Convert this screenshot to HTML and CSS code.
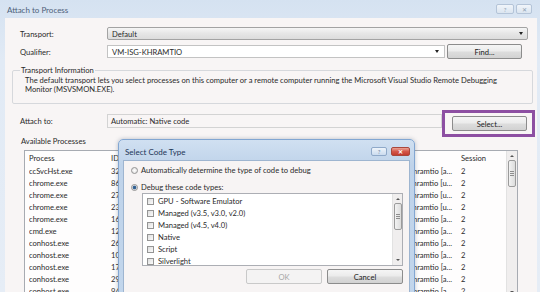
FILE: index.html
```html
<!DOCTYPE html>
<html>
<head>
<meta charset="utf-8">
<link rel="stylesheet" href="styles.css">
</head>
<body>
<div class="win">
  <div class="titlebar">
    <span class="title">Attach to Process</span>
    <div class="tbtns">
      <span class="tb">?</span>
      <span class="tb tb-x">✕</span>
    </div>
  </div>
  <div class="client">
    <div class="row r-transport">
      <span class="lbl">Transport:</span>
      <div class="combo combo-ro"><span>Default</span><span class="arrow"></span></div>
    </div>
    <div class="row r-qual">
      <span class="lbl">Qualifier:</span>
      <div class="combo combo-ed"><span>VM-ISG-KHRAMTIO</span><span class="arrow"></span></div>
      <button class="btn btn-find">Find...</button>
    </div>
    <fieldset class="group">
      <legend>Transport Information</legend>
      <p>The default transport lets you select processes on this computer or a remote computer running the Microsoft Visual Studio Remote Debugging Monitor (MSVSMON.EXE).</p>
    </fieldset>
    <div class="row r-attach">
      <span class="lbl lbl-attach">Attach to:</span>
      <div class="field">Automatic: Native code</div>
      <div class="hl"><button class="btn btn-select">Select...</button></div>
    </div>
    <div class="avail">Available Processes</div>
    <div class="plist">
      <div class="pgrid">
        <div class="prow phead"><span>Process</span><span>ID</span><span></span><span></span><span></span><span>Session</span></div>
        <div class="prow"><span>ccSvcHst.exe</span><span>3244</span><span></span><span></span><span class="user">khramtio [a...</span><span>2</span></div>
        <div class="prow"><span>chrome.exe</span><span>8612</span><span></span><span></span><span class="user">khramtio [u...</span><span>2</span></div>
        <div class="prow"><span>chrome.exe</span><span>2736</span><span></span><span></span><span class="user">khramtio [u...</span><span>2</span></div>
        <div class="prow"><span>chrome.exe</span><span>2340</span><span></span><span></span><span class="user">khramtio [u...</span><span>2</span></div>
        <div class="prow"><span>chrome.exe</span><span>1652</span><span></span><span></span><span class="user">khramtio [a...</span><span>2</span></div>
        <div class="prow"><span>cmd.exe</span><span>1288</span><span></span><span></span><span class="user">khramtio [a...</span><span>2</span></div>
        <div class="prow"><span>conhost.exe</span><span>2600</span><span></span><span></span><span class="user">khramtio [a...</span><span>2</span></div>
        <div class="prow"><span>conhost.exe</span><span>1076</span><span></span><span></span><span class="user">khramtio [a...</span><span>2</span></div>
        <div class="prow"><span>conhost.exe</span><span>1760</span><span></span><span></span><span class="user">khramtio [a...</span><span>2</span></div>
        <div class="prow"><span>conhost.exe</span><span>2932</span><span></span><span></span><span class="user">khramtio [a...</span><span>2</span></div>
        <div class="prow"><span>conhost.exe</span><span>9408</span><span></span><span></span><span class="user">khramtio [a...</span><span>2</span></div>
      </div>
      <div class="vscroll vs-main">
        <span class="sarrow up"></span>
        <span class="thumb"><i></i><i></i><i></i></span>
        <span class="sarrow down"></span>
      </div>
    </div>
  </div>

  <div class="dlg">
    <div class="dtitle">
      <span class="dtext">Select Code Type</span>
      <span class="dbtn dhelp">?</span>
      <span class="dbtn dclose">✕</span>
    </div>
    <div class="dclient">
      <div class="radio-row"><span class="radio"></span><span>Automatically determine the type of code to debug</span></div>
      <div class="radio-row r2"><span class="radio on"></span><span>Debug these code types:</span></div>
      <div class="clist">
        <div class="citems">
          <div class="citem"><span class="cb"></span><span>GPU - Software Emulator</span></div>
          <div class="citem"><span class="cb"></span><span>Managed (v3.5, v3.0, v2.0)</span></div>
          <div class="citem"><span class="cb"></span><span>Managed (v4.5, v4.0)</span></div>
          <div class="citem"><span class="cb"></span><span>Native</span></div>
          <div class="citem"><span class="cb"></span><span>Script</span></div>
          <div class="citem"><span class="cb"></span><span>Silverlight</span></div>
        </div>
        <div class="vscroll vs-dlg">
          <span class="sarrow up"></span>
          <span class="thumb"><i></i><i></i><i></i></span>
          <span class="sarrow down"></span>
        </div>
      </div>
      <div class="dbuttons">
        <button class="btn btn-ok" disabled>OK</button>
        <button class="btn btn-cancel">Cancel</button>
      </div>
    </div>
  </div>
</div>
</body>
</html>
```

FILE: styles.css
```css
* { box-sizing: border-box; }
html, body { margin: 0; padding: 0; }
body {
  width: 540px;
  height: 292px;
  overflow: hidden;
  font-family: "Lato", "Open Sans", sans-serif;
  font-size: 7.6px;
  color: #2a2a2a;
  background: #dde7f3;
}
.win {
  position: relative;
  width: 540px;
  height: 292px;
  overflow: hidden;
  display: flex;
  flex-direction: column;
  background: linear-gradient(#d5e2f1, #e1eaf5 60px, #e6edf6);
}
.titlebar {
  height: 18px;
  flex: none;
  display: flex;
  align-items: flex-start;
  padding-left: 7px;
}
.title {
  margin-top: 5px;
  font-size: 8px;
  color: #4d6079;
}
.tbtns {
  margin-left: auto;
  margin-right: 8px;
  margin-top: 4px;
  display: flex;
  gap: 2px;
}
.tb {
  width: 18px;
  height: 10px;
  border: 1px solid #b4c4d8;
  border-radius: 2px;
  background: linear-gradient(#f1f5fa, #dbe5f0);
  color: #8d9db1;
  font-size: 6px;
  display: flex;
  align-items: center;
  justify-content: center;
}
.tb-x { width: 16px; }

.client {
  flex: 1;
  margin-left: 5px;
  margin-right: 3px;
  background: #f8f5f5;
  padding: 9px 9px 0 15px;
  display: flex;
  flex-direction: column;
}
.row { display: flex; align-items: center; }
.lbl { width: 87px; flex: none; }
.combo {
  height: 13px;
  border: 1px solid #adadad;
  border-radius: 2px;
  display: flex;
  align-items: center;
  padding-left: 4px;
  padding-right: 4px;
}
.combo span:first-child { flex: 1; }
.combo-ro {
  flex: 1;
  background: linear-gradient(#f6f6f6, #e6e6e6 50%, #dcdcdc);
  border-color: #a3a3a3;
}
.combo-ed {
  width: 338px;
  background: #ffffff;
  border-color: #c3c3c3;
  border-radius: 0;
  padding-right: 5px;
}
.arrow {
  width: 0;
  height: 0;
  border-left: 2.5px solid transparent;
  border-right: 2.5px solid transparent;
  border-top: 3px solid #222;
}
.r-qual { margin-top: 4px; }
.btn {
  font-family: inherit;
  font-size: 7.6px;
  color: #222;
  height: 15px;
  width: 75px;
  padding: 0;
  border: 1px solid #8c8c8c;
  border-radius: 2px;
  background: linear-gradient(#f5f5f5, #ebebeb 48%, #dddddd 52%, #d2d2d2);
  display: flex;
  align-items: center;
  justify-content: center;
}
.btn-find { margin-left: 2px; }

.group {
  margin: 6px -5px 0 -8px;
  border: 1px solid #d6d8dc;
  border-radius: 2px;
  padding: 1px 10px 9px 12px;
  min-width: 0;
}
.group legend {
  padding: 0 1px;
  margin-left: -5px;
  line-height: 10px;
}
.group p {
  margin: 0;
  line-height: 9px;
}

.r-attach {
  margin-top: 6px;
  align-items: flex-start;
}
.lbl-attach { margin-top: 4px; line-height: 14px; }
.field {
  flex: 1;
  margin-top: 4px;
  height: 14px;
  border: 1px solid #d3d3d3;
  background: #f8f5f5;
  padding-left: 3px;
  display: flex;
  align-items: center;
}
.hl {
  width: 93px;
  height: 27px;
  margin-right: -7px;
  border: 3px solid #8d4fa2;
  padding: 3px 5px 0 7px;
}

.avail {
  margin-top: -1px;
  margin-left: 1px;
  line-height: 10px;
}
.plist {
  margin: 4px 10px 0 4px;
  flex: 1;
  border: 1px solid #a7abb2;
  background: #fefdfd;
  display: flex;
  overflow: hidden;
}
.pgrid {
  flex: 1;
  padding-left: 4px;
}
.prow {
  display: grid;
  grid-template-columns: 82px 40px 120px 80px 106px 44px;
  height: 12px;
  line-height: 12px;
  white-space: nowrap;
}
.prow span { overflow: hidden; }
.phead { height: 14px; line-height: 14px; }
.prow span:last-child { padding-left: 4px; }
.prow .user {
  display: flex;
  justify-content: flex-end;
  padding-right: 5px;
}
.vscroll {
  flex: none;
  display: flex;
  flex-direction: column;
  align-items: center;
  background: #f0eeee;
  border-left: 1px solid #e2e2e2;
}
.vs-main { width: 11px; }
.vs-dlg { width: 10px; }
.sarrow {
  width: 0;
  height: 0;
  border-left: 2px solid transparent;
  border-right: 2px solid transparent;
}
.sarrow.up { border-bottom: 2px solid #555; margin-top: 4px; }
.sarrow.down { border-top: 2px solid #555; margin-top: auto; margin-bottom: 4px; }
.thumb {
  width: 8px;
  border: 1px solid #9b9b9b;
  border-radius: 2px;
  background: linear-gradient(90deg, #f3f3f3, #dcdcdc);
  display: flex;
  flex-direction: column;
  align-items: center;
  justify-content: center;
  gap: 1px;
}
.thumb i { display: block; width: 4px; height: 1px; background: #8d8d8d; }
.vs-main .thumb { height: 27px; margin-top: 3px; }
.vs-dlg .thumb { height: 27px; margin-top: 3px; }

/* Select Code Type dialog */
.dlg {
  position: absolute;
  left: 118px;
  top: 139px;
  width: 297px;
  height: 170px;
  border: 1px solid #82a6d2;
  border-radius: 5px 5px 0 0;
  background: linear-gradient(#d0e0f1, #bfd3ea 25px, #c2d6ec);
  padding: 0 4px;
  display: flex;
  flex-direction: column;
  box-shadow: 0 0 4px rgba(60, 80, 110, 0.35);
}
.dtitle {
  height: 20px;
  flex: none;
  display: flex;
  align-items: flex-start;
  padding-left: 2px;
}
.dtext {
  margin-top: 7px;
  font-size: 8px;
  color: #1d3556;
}
.dbtn {
  margin-top: 7px;
  height: 9px;
  border-radius: 2px;
  display: flex;
  align-items: center;
  justify-content: center;
  font-size: 6px;
}
.dhelp {
  margin-left: auto;
  width: 16px;
  border: 1px solid #8fa9c9;
  background: linear-gradient(#eef4fa, #cbdcef);
  color: #6b83a3;
}
.dclose {
  width: 19px;
  margin-left: 4px;
  border: 1px solid #a8473c;
  background: linear-gradient(#eba294, #d4574a 50%, #c33c2f);
  color: #fff;
  font-weight: bold;
}
.dclient {
  flex: 1;
  background: #f7f4f4;
  border: 1px solid #9eb5d0;
  padding: 4px 6px 0 7px;
  display: flex;
  flex-direction: column;
}
.radio-row {
  display: flex;
  align-items: center;
  height: 10px;
  gap: 3px;
}
.radio-row.r2 { margin-top: 7px; }
.radio {
  width: 7px;
  height: 7px;
  border-radius: 50%;
  border: 1px solid #939393;
  background: radial-gradient(circle, #ffffff, #dcdcdc);
  flex: none;
}
.radio.on {
  background: radial-gradient(circle, #2e5a8a 0, #3b6a9c 1.6px, #e8e8e8 2.2px, #dcdcdc);
}
.clist {
  margin: 1px 0 0 11px;
  height: 73px;
  border: 1px solid #acaeb4;
  background: #ffffff;
  display: flex;
  flex: none;
  overflow: hidden;
}
.citems {
  flex: 1;
  padding: 1px 0 0 4px;
}
.citem {
  height: 12px;
  display: flex;
  align-items: center;
  gap: 4px;
  white-space: nowrap;
}
.cb {
  width: 7px;
  height: 7px;
  border: 1px solid #949494;
  background: linear-gradient(135deg, #dedede, #fbfbfb);
  flex: none;
}
.dbuttons {
  margin-top: 3px;
  display: flex;
  justify-content: flex-end;
  gap: 5px;
}
.dbuttons .btn { width: 76px; }
.btn-ok {
  color: #a6a6a6;
  border-color: #c9c9c9;
  background: #f4f3f3;
}
```
